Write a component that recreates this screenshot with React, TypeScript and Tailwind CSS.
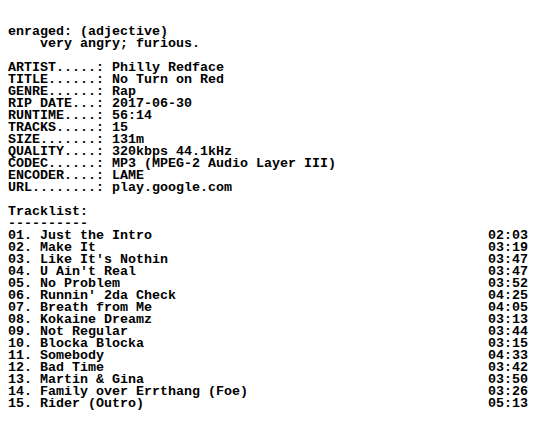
import React from 'react';

const info: [string, string][] = [
  ['ARTIST.....', 'Philly Redface'],
  ['TITLE......', 'No Turn on Red'],
  ['GENRE......', 'Rap'],
  ['RIP DATE...', '2017-06-30'],
  ['RUNTIME....', '56:14'],
  ['TRACKS.....', '15'],
  ['SIZE.......', '131m'],
  ['QUALITY....', '320kbps 44.1kHz'],
  ['CODEC......', 'MP3 (MPEG-2 Audio Layer III)'],
  ['ENCODER....', 'LAME'],
  ['URL........', 'play.google.com'],
];

const tracks: [string, string][] = [
  ['Just the Intro', '02:03'],
  ['Make It', '03:19'],
  ["Like It's Nothin", '03:47'],
  ["U Ain't Real", '03:47'],
  ['No Problem', '03:52'],
  ["Runnin' 2da Check", '04:25'],
  ['Breath from Me', '04:05'],
  ['Kokaine Dreamz', '03:13'],
  ['Not Regular', '03:44'],
  ['Blocka Blocka', '03:15'],
  ['Somebody', '04:33'],
  ['Bad Time', '03:42'],
  ['Martin & Gina', '03:50'],
  ['Family over Errthang (Foe)', '03:26'],
  ['Rider (Outro)', '05:13'],
];

export default function App() {
  return (
    <div className="w-[536px] h-[432px] bg-white text-black overflow-hidden px-2 pt-[26px] font-['Liberation_Mono',monospace] font-bold text-[13.333px] leading-[12px] whitespace-pre">
      <div>enraged: (adjective)</div>
      <div>    very angry; furious.</div>
      <div>&nbsp;</div>
      {info.map(([k, v]) => (
        <div key={k}>{k}: {v}</div>
      ))}
      <div>&nbsp;</div>
      <div>Tracklist:</div>
      <div>----------</div>
      {tracks.map(([name, time], i) => (
        <div key={name} className="flex justify-between">
          <span>{String(i + 1).padStart(2, '0')}. {name}</span>
          <span>{time}</span>
        </div>
      ))}
    </div>
  );
}
